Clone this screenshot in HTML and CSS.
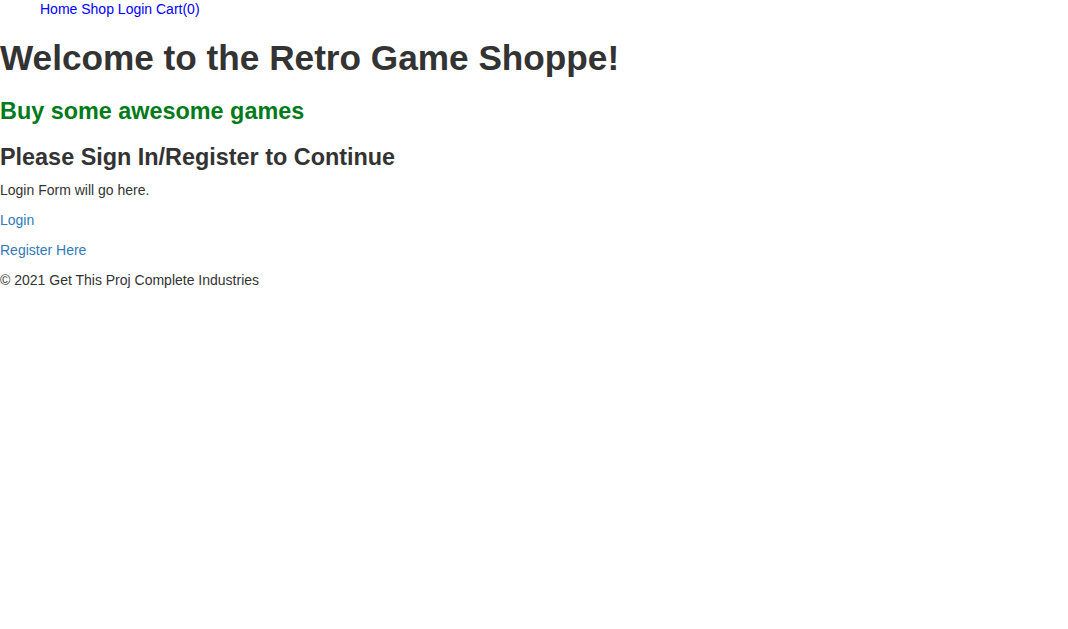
FILE: index.html
```html
<!DOCTYPE html>
<html lang="en">
<head>
<meta charset="utf-8">
<title>Retro Game Shoppe</title>
<link rel="stylesheet" href="styles.css">
</head>
<body>
<nav class="nav">
  <ul class="nav-list">
    <li><a href="#">Home</a></li>
    <li><a href="#">Shop</a></li>
    <li><a href="#">Login</a></li>
    <li><a href="#">Cart(0)</a></li>
  </ul>
</nav>
<h1 class="title">Welcome to the Retro Game Shoppe!</h1>
<h3 class="tagline">Buy some awesome games</h3>
<h3 class="section-title">Please Sign In/Register to Continue</h3>
<p class="text">Login Form will go here.</p>
<p class="text"><a class="link" href="#">Login</a></p>
<p class="text"><a class="link" href="#">Register Here</a></p>
<footer class="footer">© 2021 Get This Proj Complete Industries</footer>
</body>
</html>
```
FILE: styles.css
```css
html, body {
  margin: 0;
  padding: 0;
  background: #fff;
}
body {
  font-family: "Liberation Sans", Arial, Helvetica, sans-serif;
  font-size: 14px;
  line-height: 20px;
  color: #333333;
}
.nav-list {
  margin: 0;
  padding: 0 0 0 40px;
  list-style: none;
  line-height: 18px;
}
.nav-list li {
  display: inline;
}
.nav-list a {
  color: #0000ff;
  text-decoration: none;
}
.title {
  font-size: 35.2px;
  font-weight: 700;
  line-height: 39.6px;
  margin: 20px 0 10px;
}
.tagline, .section-title {
  font-size: 23.4px;
  font-weight: 700;
  line-height: 26.4px;
  margin: 20px 0 10px;
}
.tagline {
  color: #007a1a;
}
.text {
  margin: 0 0 10px;
}
.link {
  color: #337ab7;
  text-decoration: none;
}
.footer {
  margin: 0;
}
```
